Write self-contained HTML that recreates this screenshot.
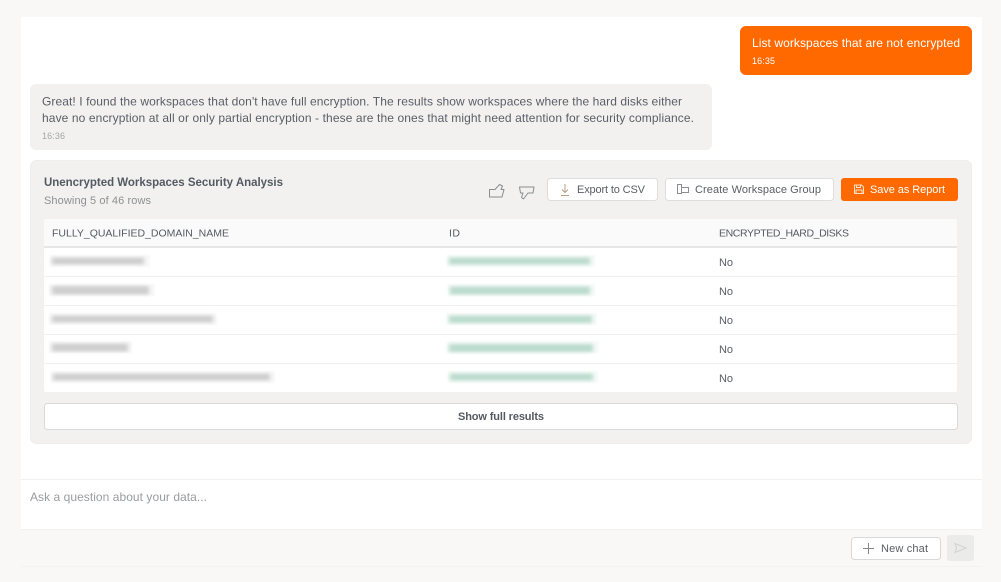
<!DOCTYPE html>
<html lang="en"><head><meta charset="utf-8"><title>Chat</title>
<style>
html,body{margin:0;padding:0;width:1001px;height:582px;overflow:hidden;background:#f9f8f7}
svg{display:block}
text{font-family:"Liberation Sans",Arial,sans-serif;font-size:12px;fill:#5a5e65;white-space:pre}
</style></head><body>
<svg width="1001" height="582" viewBox="0 0 1001 582" xmlns="http://www.w3.org/2000/svg">
<defs>
<filter id="b" filterUnits="userSpaceOnUse" x="40" y="250" width="600" height="140"><feGaussianBlur stdDeviation="2 1.6"/></filter>
<filter id="h" filterUnits="userSpaceOnUse" x="40" y="250" width="600" height="140"><feGaussianBlur stdDeviation="0.8"/></filter>
</defs>
<rect width="1001" height="582" fill="#f9f8f7"/>
<!-- main card -->
<rect x="21" y="17" width="961" height="549" rx="2" fill="#fff"/>
<rect x="21" y="479" width="961" height="1" fill="#f2f1ef"/>
<path d="M21 529H982V564a2 2 0 0 1-2 2H23a2 2 0 0 1-2-2Z" fill="#f9f8f6"/>
<rect x="21" y="529" width="961" height="1" fill="#f2f1ef"/>
<rect x="21" y="566" width="961" height="1" fill="#f3f2f0"/>
<!-- user bubble -->
<rect x="740" y="26" width="232" height="49" rx="6" fill="#ff6900"/>
<text x="752" y="47" textLength="208" style="fill:#fff;font-size:12px">List workspaces that are not encrypted</text>
<text x="752" y="64" textLength="23" style="fill:#fff;font-size:9px">16:35</text>
<!-- assistant bubble -->
<rect x="30" y="84" width="682" height="66" rx="6" fill="#f2f1f0"/>
<text x="42" y="105.500" textLength="640">Great! I found the workspaces that don't have full encryption. The results show workspaces where the hard disks either</text>
<text x="42" y="122" textLength="652">have no encryption at all or only partial encryption - these are the ones that might need attention for security compliance.</text>
<text x="42" y="139" textLength="23" style="fill:#a3a5a8;font-size:9px">16:36</text>
<!-- analysis card -->
<rect x="30.500" y="160.500" width="941" height="283" rx="6" fill="#f2f1f0" stroke="#eeedeb"/>
<text x="44" y="186" textLength="239" style="font-weight:bold;font-size:11.500px;fill:#545a63">Unencrypted Workspaces Security Analysis</text>
<text x="44" y="204" textLength="107" style="font-size:11px;fill:#8e9094">Showing 5 of 46 rows</text>
<!-- thumbs -->
<g fill="none" stroke="#8b8d91" stroke-width="1" stroke-linejoin="round" stroke-linecap="round">
<path d="M489.500 189.500H495L499.500 184.500L502.500 186L501 189.500H504L502 197H489.500Z"/>
<path d="M519.500 187H534L533 193H528L523.500 199L521.500 197.500L523 193H520.500Z"/>
</g>
<!-- export button -->
<rect x="547.500" y="178.500" width="110" height="22" rx="3" fill="#fff" stroke="#dedede"/>
<g fill="none" stroke="#b9a184" stroke-width="1"><path d="M565 184V192M562 189.500L565 192.500L568 189.500"/><path d="M561 195.500H569"/></g>
<text x="577" y="193" textLength="68" style="font-size:11px">Export to CSV</text>
<!-- create button -->
<rect x="665.500" y="178.500" width="168" height="22" rx="3" fill="#fff" stroke="#dedede"/>
<g fill="none" stroke="#8b8d91" stroke-width="1"><path d="M677.500 184.500H681.500V193.500H677.500Z"/><path d="M681.500 187.500H688.500V192.500H681.500"/></g>
<text x="695" y="193" textLength="126" style="font-size:11px">Create Workspace Group</text>
<!-- save button -->
<rect x="841" y="178" width="117" height="23" rx="3" fill="#ff6900"/>
<g fill="none" stroke="#ffe2cc" stroke-width="1"><path d="M854.500 185H861.500L863.500 187V193.500H854.500Z"/><path d="M856.500 185V187.500H860.500V185M856 193.500V190H862V193.500"/></g>
<text x="870" y="193" textLength="75" style="font-size:11px;fill:#fff">Save as Report</text>
<!-- table -->
<rect x="44" y="219" width="913" height="173" rx="2" fill="#fff"/>
<rect x="44" y="219" width="913" height="27" fill="#fafafa"/>
<rect x="44" y="246" width="913" height="2" fill="#e6e6e6"/>
<rect x="44" y="276" width="913" height="1" fill="#f0f0f0"/>
<rect x="44" y="305" width="913" height="1" fill="#f0f0f0"/>
<rect x="44" y="334" width="913" height="1" fill="#f0f0f0"/>
<rect x="44" y="363" width="913" height="1" fill="#f0f0f0"/>
<text x="52" y="236.500" textLength="177" style="font-size:10.500px;fill:#555a62">FULLY_QUALIFIED_DOMAIN_NAME</text>
<text x="449" y="236.500" textLength="11" style="font-size:10.500px;fill:#555a62">ID</text>
<text x="719" y="236.500" textLength="130" style="font-size:10.500px;fill:#555a62">ENCRYPTED_HARD_DISKS</text>
<text x="719" y="266" textLength="14" style="font-size:11px">No</text>
<text x="719" y="295" textLength="14" style="font-size:11px">No</text>
<text x="719" y="324" textLength="14" style="font-size:11px">No</text>
<text x="719" y="353" textLength="14" style="font-size:11px">No</text>
<text x="719" y="382" textLength="14" style="font-size:11px">No</text>
<!-- blurred halos -->
<g filter="url(#h)" fill="#f8f8f8">
<rect x="50" y="255" width="100" height="12"/>
<rect x="49" y="284" width="106" height="12"/>
<rect x="49" y="313" width="168" height="12"/>
<rect x="49" y="341" width="83" height="12"/>
<rect x="51" y="371" width="224" height="12"/>
</g>
<g filter="url(#h)" fill="#f6faf8">
<rect x="447" y="255" width="148" height="12"/>
<rect x="448" y="284" width="147" height="12"/>
<rect x="447" y="313" width="150" height="12"/>
<rect x="447" y="341" width="152" height="12"/>
<rect x="448" y="371" width="150" height="12"/>
</g>
<!-- blurred cells -->
<g filter="url(#b)" fill="#cfcfd0">
<rect x="52" y="257.500" width="92" height="7"/>
<rect x="52" y="286" width="97" height="8.500"/>
<rect x="52" y="315.500" width="161" height="7"/>
<rect x="52" y="343.500" width="76" height="8"/>
<rect x="53" y="373.500" width="217" height="7"/>
</g>
<g filter="url(#b)" fill="#bcdccf">
<rect x="449" y="257.500" width="141" height="7"/>
<rect x="450" y="286.500" width="140" height="8"/>
<rect x="449" y="315.500" width="143" height="7.500"/>
<rect x="449" y="344" width="144" height="8"/>
<rect x="450" y="373.500" width="143" height="7"/>
</g>
<!-- show full -->
<rect x="44.500" y="403.500" width="913" height="26" rx="3" fill="#fff" stroke="#d9d9d9"/>
<text x="458" y="420" textLength="86" style="font-size:11px;font-weight:bold;fill:#555a62">Show full results</text>
<!-- input -->
<text x="30" y="501" textLength="177" style="fill:#9a9c9f">Ask a question about your data...</text>
<!-- new chat -->
<rect x="851.500" y="537.500" width="89" height="22" rx="3" fill="#fff" stroke="#d9d9d9"/>
<path d="M868.500 543V554M863 548.500H874" stroke="#85878b" fill="none"/>
<text x="881" y="552" textLength="47" style="font-size:11px">New chat</text>
<!-- send -->
<rect x="947" y="535" width="27" height="26" rx="3" fill="#ebebea"/>
<path d="M955 543.500L966 548L955 552.500L956.500 548Z" fill="none" stroke="#d2d2d2"/>
</svg>
</body></html>
